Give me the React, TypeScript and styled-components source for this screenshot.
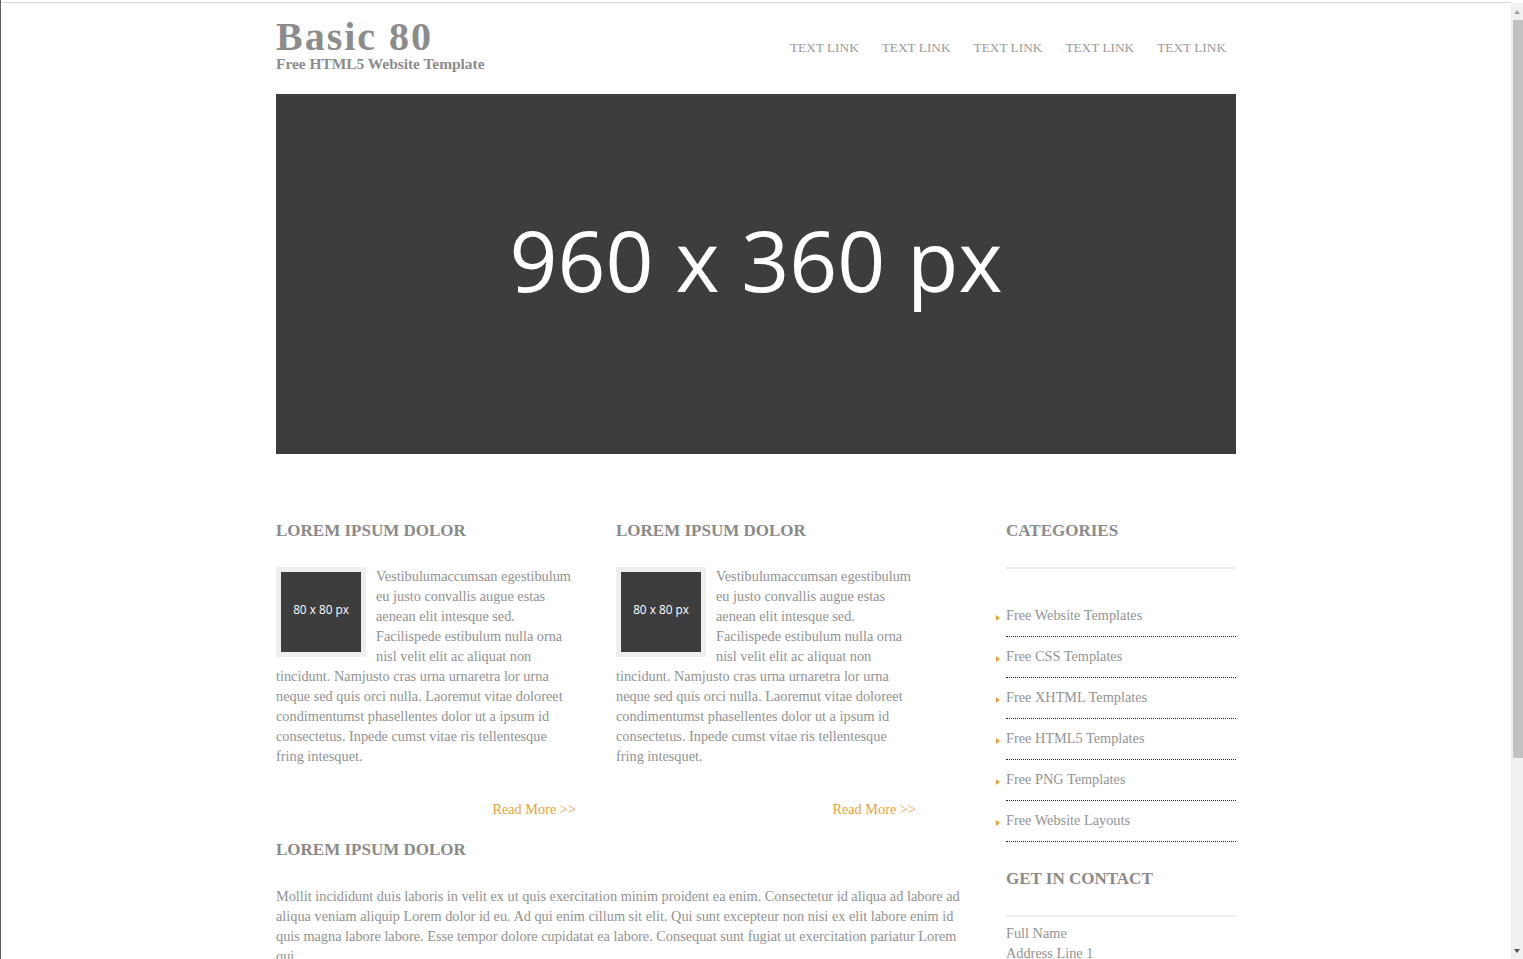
import React from "react";
import styled, { createGlobalStyle } from "styled-components";

const GlobalStyle = createGlobalStyle`
  html, body {
    margin: 0;
    padding: 0;
    height: 100%;
    overflow: hidden;
    background: #ffffff;
  }
  body {
    font-family: "Liberation Serif", "Times New Roman", serif;
    color: #909090;
  }
  * { box-sizing: border-box; }
`;

const Window = styled.div`
  display: flex;
  height: 100vh;
  border-left: 1px solid #5e5e5e;
`;

const Viewport = styled.div`
  flex: 1;
  min-width: 0;
  overflow: hidden;
  display: flex;
  flex-direction: column;
`;

const TopLine = styled.div`
  margin-top: 2px;
  height: 1px;
  background: #d9d9d9;
  flex-shrink: 0;
`;

const Container = styled.div`
  width: 960px;
  margin: 0 auto;
`;

const Header = styled.header`
  display: flex;
  justify-content: space-between;
  align-items: flex-start;
  padding-top: 15.5px;
`;

const Brand = styled.div`
  display: flex;
  flex-direction: column;
`;

const Title = styled.h1`
  margin: 0;
  font-size: 40px;
  line-height: 36px;
  font-weight: bold;
  letter-spacing: 2px;
  color: #8c8c8c;
`;

const Tagline = styled.p`
  margin: 0;
  font-size: 15.4px;
  line-height: 18px;
  font-weight: bold;
  color: #8c8c8c;
`;

const Nav = styled.nav`
  display: flex;
  gap: 23px;
  margin-top: 19.5px;
  padding-right: 10px;
`;

const NavLink = styled.a`
  font-size: 13.3px;
  line-height: 20px;
  color: #9a9a9a;
  text-decoration: none;
  text-transform: uppercase;
`;

const Banner = styled.div`
  margin-top: 21px;
  height: 360px;
  background: #3d3d3d;
  display: flex;
  justify-content: center;
  align-items: center;
  padding-bottom: 28px;
  font-family: "Open Sans", "Noto Sans", sans-serif;
  font-size: 84px;
  line-height: 84px;
  color: #ffffff;
`;

const Content = styled.div`
  display: flex;
  gap: 40px;
  margin-top: 67px;
`;

const Main = styled.div`
  width: 690px;
  display: flex;
  flex-direction: column;
`;

const Columns = styled.div`
  display: grid;
  grid-template-columns: 300px 300px;
  column-gap: 40px;
`;

const Heading = styled.h2<{ $rule?: boolean }>`
  margin: 0;
  font-size: 17px;
  line-height: 20px;
  font-weight: bold;
  text-transform: uppercase;
  color: #8a8a8a;
  padding-bottom: ${(p) => (p.$rule ? "26px" : "27px")};
  border-bottom: ${(p) => (p.$rule ? "2px solid #eeeeee" : "0")};
`;

const Article = styled.article`
  display: flex;
  flex-direction: column;
`;

const Body = styled.div`
  font-size: 14.3px;
  line-height: 20px;
  color: #919191;
  margin-top: -2px;
`;

const Thumb = styled.div`
  float: left;
  width: 90px;
  height: 90px;
  padding: 5px;
  margin: 1px 10px 0 0;
  background: #eeeeee;
`;

const ThumbInner = styled.div`
  width: 80px;
  height: 80px;
  background: #3d3d3d;
  display: flex;
  align-items: center;
  justify-content: center;
  padding-bottom: 6px;
  font-family: "Open Sans", "Noto Sans", sans-serif;
  font-size: 11.8px;
  color: #ffffff;
`;

const ReadMore = styled.a`
  align-self: flex-end;
  margin-top: 33px;
  font-size: 14.3px;
  line-height: 20px;
  color: #e9a23a;
  text-decoration: none;
`;

const Section = styled.section`
  margin-top: 21px;
`;

const Paragraph = styled.p`
  margin: -1px 0 0;
  font-size: 14.3px;
  line-height: 20px;
  color: #919191;
`;

const Sidebar = styled.aside`
  width: 230px;
  display: flex;
  flex-direction: column;
`;

const CatList = styled.ul`
  list-style: none;
  margin: 27px 0 0;
  padding: 0;
`;

const CatItem = styled.li`
  padding: 9px 0 11px;
  line-height: 20px;
  font-size: 14.3px;
  color: #939393;
  border-bottom: 1px dotted #2a2a2a;
  &::before {
    content: "";
    display: inline-block;
    width: 0;
    height: 0;
    margin-left: -10px;
    margin-right: 6px;
    border-left: 4px solid #e9a23a;
    border-top: 3px solid transparent;
    border-bottom: 3px solid transparent;
    vertical-align: -1px;
  }
`;

const ContactBlock = styled.div`
  margin-top: 27px;
`;

const ContactLines = styled.div`
  margin-top: 6px;
  font-size: 14.3px;
  line-height: 20px;
  color: #939393;
`;

const ScrollRail = styled.div`
  width: 12px;
  margin-top: 3px;
  background: #f1f1f1;
  display: flex;
  flex-direction: column;
  align-items: flex-end;
  flex-shrink: 0;
`;

const ArrowButton = styled.div<{ $down?: boolean; $active?: boolean }>`
  width: 12px;
  height: 17px;
  display: flex;
  align-items: center;
  justify-content: center;
  &::after {
    content: "";
    width: 0;
    height: 0;
    border-left: 3.5px solid transparent;
    border-right: 3.5px solid transparent;
    ${(p) =>
      p.$down
        ? `border-top: 4px solid ${p.$active ? "#505050" : "#a3a3a3"};`
        : `border-bottom: 4px solid ${p.$active ? "#505050" : "#a3a3a3"};`}
  }
`;

const ScrollThumb = styled.div`
  width: 10px;
  height: 738px;
  background: #c1c1c1;
`;

const RailSpacer = styled.div`
  flex: 1;
`;

const bodyText =
  "Vestibulumaccumsan egestibulum eu justo convallis augue estas aenean elit intesque sed. Facilispede estibulum nulla orna nisl velit elit ac aliquat non tincidunt. Namjusto cras urna urnaretra lor urna neque sed quis orci nulla. Laoremut vitae doloreet condimentumst phasellentes dolor ut a ipsum id consectetus. Inpede cumst vitae ris tellentesque fring intesquet.";

const categories = [
  "Free Website Templates",
  "Free CSS Templates",
  "Free XHTML Templates",
  "Free HTML5 Templates",
  "Free PNG Templates",
  "Free Website Layouts",
];

function Teaser() {
  return (
    <Article>
      <Heading>Lorem Ipsum Dolor</Heading>
      <Body>
        <Thumb>
          <ThumbInner>80 x 80 px</ThumbInner>
        </Thumb>
        {bodyText}
      </Body>
      <ReadMore href="#">Read More &gt;&gt;</ReadMore>
    </Article>
  );
}

export default function App() {
  return (
    <>
      <GlobalStyle />
      <Window>
        <Viewport>
          <TopLine />
          <Container>
            <Header>
              <Brand>
                <Title>Basic 80</Title>
                <Tagline>Free HTML5 Website Template</Tagline>
              </Brand>
              <Nav>
                {[0, 1, 2, 3, 4].map((i) => (
                  <NavLink key={i} href="#">
                    Text Link
                  </NavLink>
                ))}
              </Nav>
            </Header>
            <Banner>960 x 360 px</Banner>
            <Content>
              <Main>
                <Columns>
                  <Teaser />
                  <Teaser />
                </Columns>
                <Section>
                  <Heading>Lorem Ipsum Dolor</Heading>
                  <Paragraph>
                    Mollit incididunt duis laboris in velit ex ut quis exercitation minim proident ea enim.
                    Consectetur id aliqua ad labore ad aliqua veniam aliquip Lorem dolor id eu. Ad qui enim
                    cillum sit elit. Qui sunt excepteur non nisi ex elit labore enim id quis magna labore
                    labore. Esse tempor dolore cupidatat ea labore. Consequat sunt fugiat ut exercitation
                    pariatur Lorem qui.
                  </Paragraph>
                </Section>
              </Main>
              <Sidebar>
                <Heading $rule>Categories</Heading>
                <CatList>
                  {categories.map((c) => (
                    <CatItem key={c}>{c}</CatItem>
                  ))}
                </CatList>
                <ContactBlock>
                  <Heading $rule>Get In Contact</Heading>
                  <ContactLines>
                    Full Name
                    <br />
                    Address Line 1
                  </ContactLines>
                </ContactBlock>
              </Sidebar>
            </Content>
          </Container>
        </Viewport>
        <ScrollRail>
          <ArrowButton />
          <ScrollThumb />
          <RailSpacer />
          <ArrowButton $down $active />
        </ScrollRail>
      </Window>
    </>
  );
}
